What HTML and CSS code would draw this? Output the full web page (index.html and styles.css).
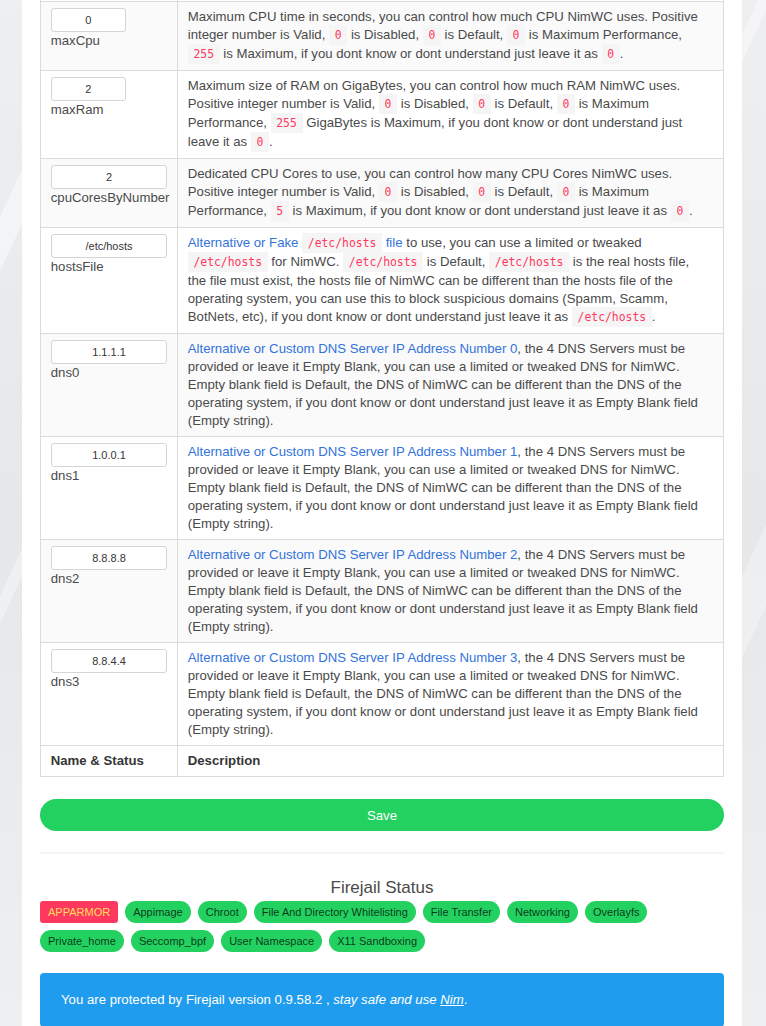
FILE: index.html
```html
<!DOCTYPE html>
<html>
<head>
<meta charset="utf-8">
<link rel="stylesheet" href="styles.css">
</head>
<body>
<div class="page">
  <table class="cfg">
    <colgroup><col class="c-name"><col class="c-desc"></colgroup>
    <tbody>
      <tr class="peek"><td></td><td></td></tr>
      <tr>
        <td><input class="inp inp-s" value="0"><span class="lbl">maxCpu</span></td>
        <td>Maximum CPU time in seconds, you can control how much CPU NimWC uses. Positive integer number is Valid, <code>0</code> is Disabled, <code>0</code> is Default, <code>0</code> is Maximum Performance, <code>255</code> is Maximum, if you dont know or dont understand just leave it as <code>0</code>.</td>
      </tr>
      <tr>
        <td><input class="inp inp-s" value="2"><span class="lbl">maxRam</span></td>
        <td>Maximum size of RAM on GigaBytes, you can control how much RAM NimWC uses. Positive integer number is Valid, <code>0</code> is Disabled, <code>0</code> is Default, <code>0</code> is Maximum Performance, <code>255</code> GigaBytes is Maximum, if you dont know or dont understand just leave it as <code>0</code>.</td>
      </tr>
      <tr>
        <td><input class="inp" value="2"><span class="lbl">cpuCoresByNumber</span></td>
        <td>Dedicated CPU Cores to use, you can control how many CPU Cores NimWC uses. Positive integer number is Valid, <code>0</code> is Disabled, <code>0</code> is Default, <code>0</code> is Maximum Performance, <code>5</code> is Maximum, if you dont know or dont understand just leave it as <code>0</code>.</td>
      </tr>
      <tr>
        <td><input class="inp" value="/etc/hosts"><span class="lbl">hostsFile</span></td>
        <td><a href="#">Alternative or Fake <code>/etc/hosts</code> file</a> to use, you can use a limited or tweaked <code>/etc/hosts</code> for NimWC. <code>/etc/hosts</code> is Default, <code>/etc/hosts</code> is the real hosts file, the file must exist, the hosts file of NimWC can be different than the hosts file of the operating system, you can use this to block suspicious domains (Spamm, Scamm, BotNets, etc), if you dont know or dont understand just leave it as <code>/etc/hosts</code>.</td>
      </tr>
      <tr>
        <td><input class="inp" value="1.1.1.1"><span class="lbl">dns0</span></td>
        <td><a href="#">Alternative or Custom DNS Server IP Address Number 0</a>, the 4 DNS Servers must be provided or leave it Empty Blank, you can use a limited or tweaked DNS for NimWC. Empty blank field is Default, the DNS of NimWC can be different than the DNS of the operating system, if you dont know or dont understand just leave it as Empty Blank field (Empty string).</td>
      </tr>
      <tr>
        <td><input class="inp" value="1.0.0.1"><span class="lbl">dns1</span></td>
        <td><a href="#">Alternative or Custom DNS Server IP Address Number 1</a>, the 4 DNS Servers must be provided or leave it Empty Blank, you can use a limited or tweaked DNS for NimWC. Empty blank field is Default, the DNS of NimWC can be different than the DNS of the operating system, if you dont know or dont understand just leave it as Empty Blank field (Empty string).</td>
      </tr>
      <tr>
        <td><input class="inp" value="8.8.8.8"><span class="lbl">dns2</span></td>
        <td><a href="#">Alternative or Custom DNS Server IP Address Number 2</a>, the 4 DNS Servers must be provided or leave it Empty Blank, you can use a limited or tweaked DNS for NimWC. Empty blank field is Default, the DNS of NimWC can be different than the DNS of the operating system, if you dont know or dont understand just leave it as Empty Blank field (Empty string).</td>
      </tr>
      <tr>
        <td><input class="inp" value="8.8.4.4"><span class="lbl">dns3</span></td>
        <td><a href="#">Alternative or Custom DNS Server IP Address Number 3</a>, the 4 DNS Servers must be provided or leave it Empty Blank, you can use a limited or tweaked DNS for NimWC. Empty blank field is Default, the DNS of NimWC can be different than the DNS of the operating system, if you dont know or dont understand just leave it as Empty Blank field (Empty string).</td>
      </tr>
    </tbody>
    <tfoot>
      <tr><th>Name &amp; Status</th><th>Description</th></tr>
    </tfoot>
  </table>

  <button class="save">Save</button>

  <hr class="sep">

  <h2 class="title">Firejail Status</h2>
  <div class="tags">
    <span class="tag danger">APPARMOR</span>
    <span class="tag ok">Appimage</span>
    <span class="tag ok">Chroot</span>
    <span class="tag ok">File And Directory Whitelisting</span>
    <span class="tag ok">File Transfer</span>
    <span class="tag ok">Networking</span>
    <span class="tag ok">Overlayfs</span>
    <span class="tag ok">Private_home</span>
    <span class="tag ok">Seccomp_bpf</span>
    <span class="tag ok">User Namespace</span>
    <span class="tag ok">X11 Sandboxing</span>
  </div>

  <div class="note">You are protected by Firejail version 0.9.58.2 , <em>stay safe and use <a href="#">Nim</a></em>.</div>
</div>
</body>
</html>
```

FILE: styles.css
```css
html, body {
  margin: 0;
  padding: 0;
}
body {
  font-family: "Liberation Sans", Arial, sans-serif;
  color: #4a4a4a;
  background-color: #e8e9eb;
  background-image:
    linear-gradient(115deg, transparent 0 8%, rgba(255,255,255,0.45) 8% 10%, transparent 10% 22%, rgba(255,255,255,0.35) 22% 23%, transparent 23% 40%, rgba(255,255,255,0.3) 40% 43%, transparent 43% 60%, rgba(255,255,255,0.4) 60% 61%, transparent 61% 80%, rgba(255,255,255,0.3) 80% 83%, transparent 83%),
    linear-gradient(180deg, #eeeff1, #e6e7e9 50%, #eff0f1);
  min-height: 1026px;
}
.page {
  width: 684px;
  margin: 0 0 0 22px;
  padding: 0 18px 40px;
  background: #fff;
  min-height: 1026px;
}

.cfg {
  width: 100%;
  border-collapse: collapse;
  table-layout: fixed;
  font-size: 13.2px;
  line-height: 18px;
  margin-top: -11px;
}
.c-name { width: 137px; }
.cfg td, .cfg th {
  border: 1px solid #dbdbdb;
  padding: 6px 9.75px;
  vertical-align: top;
  text-align: left;
}
.cfg td + td { padding-right: 20px; }
.cfg tr.peek td { height: 12px; padding: 0; line-height: 0; box-sizing: border-box; }
.cfg tbody tr:nth-child(even) { background: #fafafa; }
.cfg th {
  color: #363636;
  font-weight: bold;
}
.cfg a {
  color: #3273dc;
  text-decoration: none;
}
code {
  font-family: "DejaVu Sans Mono", monospace;
  font-size: 11.4px;
  line-height: 19px;
  background: #f5f5f5;
  color: #ff3860;
  padding: 0.25em 0.5em;
  font-weight: normal;
}
.inp {
  display: block;
  box-sizing: border-box;
  width: 100%;
  height: 24px;
  margin: 0;
  padding: 0 4px;
  border: 1px solid #d5d5d5;
  border-radius: 3px;
  background: #fff;
  font-family: "Liberation Sans", Arial, sans-serif;
  font-size: 11px;
  color: #363636;
  text-align: center;
}
.inp-s { width: 75px; }
.lbl {
  display: block;
  color: #4a4a4a;
}

.save {
  display: block;
  width: 100%;
  height: 32px;
  margin: 22px 0 0;
  border: 0;
  border-radius: 290486px;
  background: #23d160;
  color: #fff;
  font-family: "Liberation Sans", Arial, sans-serif;
  font-size: 13.2px;
}
.sep {
  border: 0;
  height: 2px;
  background: #f5f5f5;
  margin: 21px 0 0;
}
.title {
  margin: 24px 0 0;
  text-align: center;
  font-weight: normal;
  font-size: 17px;
  line-height: 20px;
  color: #4a4a4a;
}
.tags {
  display: flex;
  flex-wrap: wrap;
  gap: 7px;
  margin-top: 3px;
}
.tag {
  display: inline-flex;
  align-items: center;
  height: 22px;
  padding: 0 8px;
  font-size: 11px;
  border-radius: 290486px;
  white-space: nowrap;
}
.tag.ok {
  background: #23d160;
  color: rgba(0,0,0,0.75);
}
.tag.danger {
  background: #ff3860;
  color: #ffdd57;
  border-radius: 3px;
}
.note {
  margin-top: 21px;
  background: #209cee;
  color: #fff;
  border-radius: 4px;
  padding: 18px 35px 18px 21px;
  font-size: 13.2px;
  line-height: 18px;
}
.note a {
  color: #fff;
  text-decoration: underline;
}
```
